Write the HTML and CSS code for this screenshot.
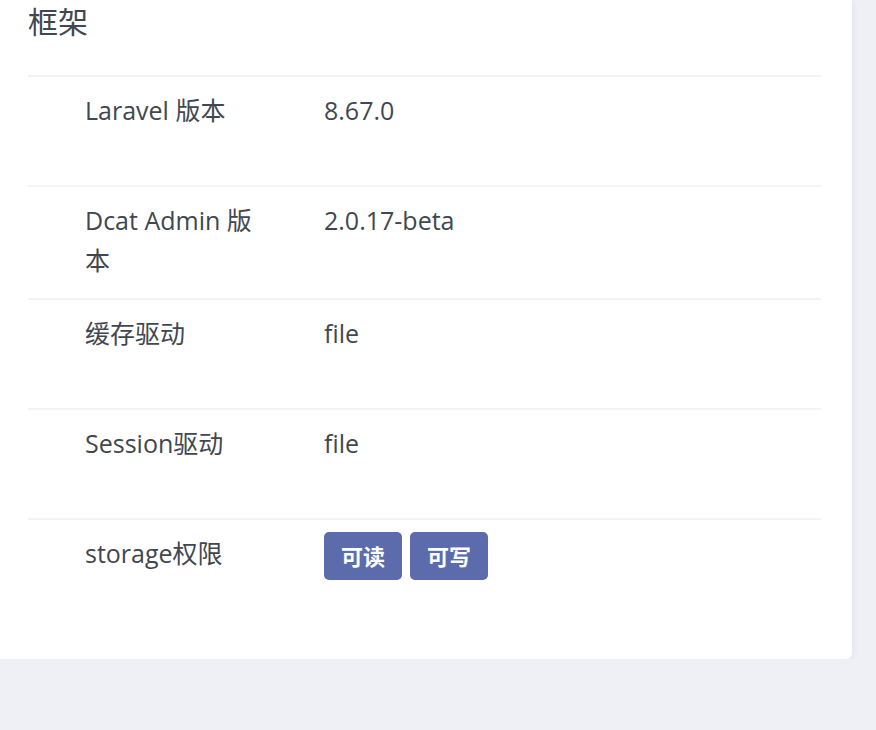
FILE: index.html
```html
<!DOCTYPE html>
<html>
<head>
    <title>框架</title>
    <link rel="stylesheet" href="styles.css">
</head>
<body>
    <div class="card">
        <h3 class="card-title">框架</h3>

        <div class="info-table">
            <div class="info-row">
                <div class="info-label">Laravel 版本</div>
                <div class="info-value">8.67.0</div>
            </div>
            <div class="info-row">
                <div class="info-label">Dcat Admin 版本</div>
                <div class="info-value">2.0.17-beta</div>
            </div>
            <div class="info-row">
                <div class="info-label">缓存驱动</div>
                <div class="info-value">file</div>
            </div>
            <div class="info-row">
                <div class="info-label">Session驱动</div>
                <div class="info-value">file</div>
            </div>
            <div class="info-row">
                <div class="info-label">storage权限</div>
                <div class="info-value badges">
                    <span class="badge">可读</span>
                    <span class="badge">可写</span>
                </div>
            </div>
        </div>
    </div>
</body>
</html>
```

FILE: styles.css
```css
body {
    margin: 0;
    padding: 0 24px 0 0;
    background-color: #eff0f5;
    font-family: "Open Sans", "Noto Sans CJK SC", sans-serif;
    color: #414750;
    overflow: hidden;
}

.card {
    background-color: #fff;
    margin-left: -10px;
    padding: 0 31px 31px 38px;
    border-radius: 0 0 6px 6px;
    box-shadow: 0 2px 8px rgba(0, 0, 0, 0.06);
}

.card-title {
    margin: 0;
    padding-top: 2px;
    height: 73px;
    font-size: 30px;
    font-weight: normal;
    line-height: 40px;
}

.info-row {
    display: flex;
    box-sizing: border-box;
    min-height: 110px;
    padding: 13px 0 18px 0;
    border-top: 2px solid #f1f3f6;
    font-size: 25px;
    line-height: 40px;
}

.info-label {
    box-sizing: border-box;
    width: 242px;
    padding: 0 0 0 57px;
    margin-right: 54px;
}

.info-value {
    flex: 1;
}

.badges {
    display: flex;
    gap: 8px;
    align-items: flex-start;
}

.badge {
    margin-top: -1px;
    padding: 10px 17px;
    border-radius: 5px;
    background-color: #5c6bac;
    color: #fff;
    font-size: 22px;
    font-weight: bold;
    line-height: 28px;
}
```
